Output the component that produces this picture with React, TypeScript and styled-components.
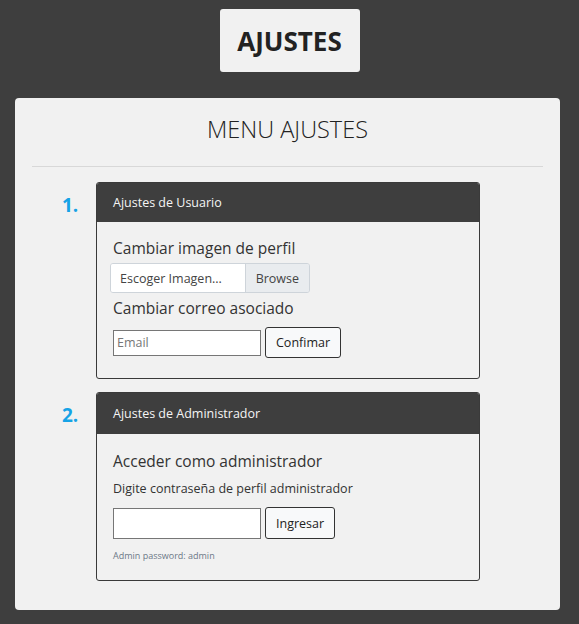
import React from 'react';
import styled, { createGlobalStyle } from 'styled-components';

const GlobalStyle = createGlobalStyle`
    body {
        margin: 0;
        background-color: #3e3e3e;
        font-family: "Open Sans", "Noto Sans", sans-serif;
        color: #212529;
    }
`

const Page = styled.div`
    display: flex;
    flex-direction: column;
    align-items: center;
    padding: 9px 19px 14px 15px;
    gap: 26px;
`

const TitleBox = styled.div`
    background-color: #f1f1f1;
    border-radius: 3px;
    width: 140px;
    height: 63px;
    margin-left: 4px;
    display: flex;
    align-items: center;
    justify-content: center;
`

const TitleText = styled.h1`
    margin: 0;
    font-size: 26px;
    font-weight: 700;
    color: #222;
`

const MainCard = styled.div`
    align-self: stretch;
    background-color: #f1f1f1;
    border-radius: 4px;
    padding: 16px 17px 29px 17px;
`

const MenuTitle = styled.h2`
    margin: 0;
    text-align: center;
    font-size: 23.5px;
    font-weight: 300;
    color: #222;
    line-height: 30px;
`

const Divider = styled.hr`
    border: 0;
    border-top: 1px solid #d8d8d8;
    margin: 22px 0 15px 0;
`

const Sections = styled.div`
    display: flex;
    flex-direction: column;
    gap: 13px;
`

const Section = styled.div`
    display: flex;
`

const Number = styled.div`
    width: 64px;
    padding-left: 30px;
    box-sizing: border-box;
    padding-top: 10px;
    font-size: 19px;
    font-weight: 700;
    color: #16a3e6;
`

const Card = styled.div`
    width: 384px;
    box-sizing: border-box;
    border: 1px solid #3a3a3a;
    border-radius: 3px;
    overflow: hidden;
`

const CardHeader = styled.div<{ $height: number }>`
    background-color: #3e3e3e;
    color: #f5f5f5;
    height: ${p => p.$height}px;
    display: flex;
    align-items: center;
    padding-left: 16px;
    font-size: 12.5px;
`

const CardBody = styled.div<{ $bottom: number }>`
    padding: 14px 16px ${p => p.$bottom}px 16px;
    display: flex;
    flex-direction: column;
    align-items: flex-start;
`

const Label = styled.div<{ $top?: number }>`
    font-size: 15.5px;
    color: #333;
    line-height: 24px;
    margin-top: ${p => p.$top ?? 0}px;
`

const SmallLabel = styled.div`
    font-size: 12.5px;
    color: #333;
    margin-top: 7px;
`

const FileInput = styled.div`
    display: flex;
    width: 200px;
    height: 30px;
    border: 1px solid #ced4da;
    border-radius: 3px;
    overflow: hidden;
    box-sizing: border-box;
    margin: 3px 0 0 -3px;
    font-size: 12.5px;
    color: #444;
`

const FileName = styled.div`
    flex: 1;
    background-color: #fff;
    display: flex;
    align-items: center;
    padding-left: 9px;
`

const FileButton = styled.div`
    background-color: #e9ecef;
    border-left: 1px solid #ced4da;
    display: flex;
    align-items: center;
    padding: 0 10px;
`

const Row = styled.div<{ $top: number }>`
    display: flex;
    align-items: center;
    gap: 4px;
    margin-top: ${p => p.$top}px;
`

const TextInput = styled.input<{ $height: number }>`
    width: 148px;
    height: ${p => p.$height}px;
    box-sizing: border-box;
    border: 1px solid #767676;
    background: #fff;
    padding: 2px 3px;
    font-family: inherit;
    font-size: 12.5px;
    &::placeholder {
        color: #777;
    }
`

const Button = styled.button<{ $height: number }>`
    height: ${p => p.$height}px;
    padding: 0 10px;
    background-color: #f8f9fa;
    border: 1px solid #333;
    border-radius: 3px;
    font-family: inherit;
    font-size: 12.5px;
    color: #222;
`

const Hint = styled.div`
    font-size: 9px;
    color: #6c7887;
    margin-top: 10px;
`

const App = () => {
    return (
        <>
            <GlobalStyle />
            <Page>
                <TitleBox>
                    <TitleText>AJUSTES</TitleText>
                </TitleBox>
                <MainCard>
                    <MenuTitle>MENU AJUSTES</MenuTitle>
                    <Divider />
                    <Sections>
                        <Section>
                            <Number>1.</Number>
                            <Card>
                                <CardHeader $height={39}>Ajustes de Usuario</CardHeader>
                                <CardBody $bottom={20}>
                                    <Label>Cambiar imagen de perfil</Label>
                                    <FileInput>
                                        <FileName>Escoger Imagen...</FileName>
                                        <FileButton>Browse</FileButton>
                                    </FileInput>
                                    <Label $top={3}>Cambiar correo asociado</Label>
                                    <Row $top={7}>
                                        <TextInput $height={26} placeholder="Email" />
                                        <Button $height={31}>Confimar</Button>
                                    </Row>
                                </CardBody>
                            </Card>
                        </Section>
                        <Section>
                            <Number>2.</Number>
                            <Card>
                                <CardHeader $height={41}>Ajustes de Administrador</CardHeader>
                                <CardBody $bottom={18}>
                                    <Label $top={1}>Acceder como administrador</Label>
                                    <SmallLabel>Digite contraseña de perfil administrador</SmallLabel>
                                    <Row $top={10}>
                                        <TextInput $height={31} />
                                        <Button $height={32}>Ingresar</Button>
                                    </Row>
                                    <Hint>Admin password: admin</Hint>
                                </CardBody>
                            </Card>
                        </Section>
                    </Sections>
                </MainCard>
            </Page>
        </>
    )
}

export default App
